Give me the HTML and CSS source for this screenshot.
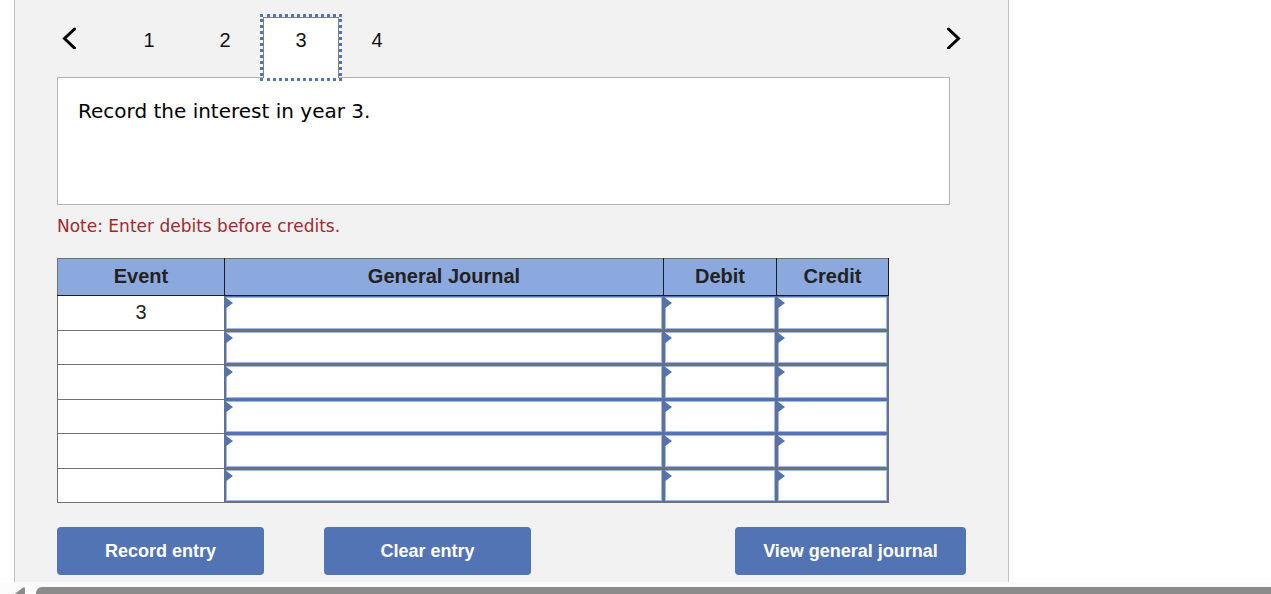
FILE: index.html
```html
<!DOCTYPE html>
<html lang="en">
<head>
<meta charset="utf-8">
<title>Journal entry worksheet</title>
<link rel="stylesheet" href="styles.css">
</head>
<body>
<main class="panel">
  <nav class="steps" aria-label="Entries">
    <button class="arrow" type="button" aria-label="Previous"><svg width="16" height="22" viewBox="0 0 16 22"><path d="M12.500 2L2.500 11.500L12.500 21"/></svg></button>
    <div class="tabs">
      <button class="tab" type="button">1</button>
      <button class="tab" type="button">2</button>
      <button class="tab tab-active" type="button" aria-current="step">3</button>
      <button class="tab" type="button">4</button>
    </div>
    <button class="arrow" type="button" aria-label="Next"><svg width="16" height="22" viewBox="0 0 16 22"><path d="M3.500 2L13.500 11.500L3.500 21"/></svg></button>
  </nav>
  <section class="prompt">Record the interest in year 3.</section>
  <p class="note">Note: Enter debits before credits.</p>
  <table class="journal">
    <colgroup><col class="col-event"><col class="col-journal"><col class="col-debit"><col class="col-credit"></colgroup>
    <thead><tr><th scope="col">Event</th><th scope="col">General Journal</th><th scope="col">Debit</th><th scope="col">Credit</th></tr></thead>
    <tbody>
      <tr><td>3</td><td class="entry"><input type="text" aria-label="Account 1"></td><td class="entry"><input type="text" aria-label="Debit 1"></td><td class="entry"><input type="text" aria-label="Credit 1"></td></tr>
      <tr><td></td><td class="entry"><input type="text" aria-label="Account 2"></td><td class="entry"><input type="text" aria-label="Debit 2"></td><td class="entry"><input type="text" aria-label="Credit 2"></td></tr>
      <tr><td></td><td class="entry"><input type="text" aria-label="Account 3"></td><td class="entry"><input type="text" aria-label="Debit 3"></td><td class="entry"><input type="text" aria-label="Credit 3"></td></tr>
      <tr><td></td><td class="entry"><input type="text" aria-label="Account 4"></td><td class="entry"><input type="text" aria-label="Debit 4"></td><td class="entry"><input type="text" aria-label="Credit 4"></td></tr>
      <tr><td></td><td class="entry"><input type="text" aria-label="Account 5"></td><td class="entry"><input type="text" aria-label="Debit 5"></td><td class="entry"><input type="text" aria-label="Credit 5"></td></tr>
      <tr><td></td><td class="entry"><input type="text" aria-label="Account 6"></td><td class="entry"><input type="text" aria-label="Debit 6"></td><td class="entry"><input type="text" aria-label="Credit 6"></td></tr>
    </tbody>
  </table>
  <div class="actions">
    <div class="actions-left">
      <button class="action" type="button">Record entry</button>
      <button class="action" type="button">Clear entry</button>
    </div>
    <button class="action action-wide" type="button">View general journal</button>
  </div>
</main>
<div class="scrollbar" aria-hidden="true">
  <svg class="scroll-arrow" width="12" height="12" viewBox="0 0 12 12"><path d="M0 7.500L9 0.500Q11 -0.500 11 2V12H0Z"/></svg>
  <div class="scroll-thumb"></div>
</div>
</body>
</html>
```
FILE: styles.css
```css
* { box-sizing: border-box; }
body {
  margin: 0;
  background: #fff;
  color: #000;
  font-family: "Liberation Sans", Arial, sans-serif;
  font-size: 20px;
}
button { border: 0; padding: 0; background: none; color: inherit; font: inherit; }
.panel {
  max-width: 995px;
  margin: 0 14px;
  padding: 17px 42px 7px;
  border: solid #c0c0c0;
  border-width: 0 1px;
  background: #f2f2f2;
}
.steps { display: flex; align-items: flex-start; }
.arrow { display: flex; padding: 10px 5px 0; }
.arrow svg { fill: none; stroke: #000; stroke-width: 3; stroke-linecap: round; }
.tabs { display: flex; flex: 1; margin-left: 28px; }
.tab {
  width: 76px;
  height: 61px;
  padding-bottom: 16px;
  border: solid transparent;
  border-width: 1px 1px 0;
  color: #111;
}
.tab-active {
  position: relative;
  background: #fff;
  border-color: #808080;
  outline: 3px dotted #5274b4;
}
.prompt {
  min-height: 128px;
  margin: -1px 16px 0 0;
  padding: 20px;
  border: 1px solid #b3b3b3;
  background: #fff;
  font-family: "DejaVu Sans", Verdana, sans-serif;
  font-size: 20px;
  line-height: 26px;
}
.note {
  margin: 9px 0 20px;
  color: #9e2a2b;
  font-family: "DejaVu Sans", Verdana, sans-serif;
  font-size: 17px;
  line-height: 24px;
}
.journal {
  width: 100%;
  max-width: 832px;
  table-layout: fixed;
  border-collapse: collapse;
  background: #fff;
  color: #222;
}
.col-event { width: 167px; }
.col-debit { width: 113px; }
.col-credit { width: 112px; }
.journal th {
  height: 37px;
  padding: 0 0 2px;
  border: 1px solid #1c1c1c;
  background: #8ca9df;
}
.journal thead th { border-top-color: #707070; }
.journal th:first-child { border-left-color: #707070; }
.journal td {
  position: relative;
  height: 35px;
  padding: 0;
  border: 1px solid #707070;
  text-align: center;
}
.journal td:first-child { padding-bottom: 2px; }
.journal tr:nth-child(even) td { height: 34px; }
.entry input {
  display: block;
  width: 100%;
  height: 34px;
  padding: 0 8px;
  border: 1px solid #5274b4;
  box-shadow: inset 0 0 0 1px #a4b7dc;
  background: #fff;
  font: inherit;
}
.journal tr:nth-child(even) input { height: 33px; }
.entry::before {
  content: "";
  position: absolute;
  top: 1px;
  left: 0;
  width: 8px;
  height: 12px;
  background: #5274b4;
  clip-path: polygon(0 0, 100% 50%, 0 100%);
}
.actions { display: flex; justify-content: space-between; margin-top: 24px; }
.actions-left { display: flex; gap: 60px; }
.action {
  width: 207px;
  height: 48px;
  border-radius: 4px;
  background: #5274b4;
  color: #fff;
  font-size: 18px;
  font-weight: bold;
}
.action-wide { width: 231px; }
.scrollbar {
  display: flex;
  height: 12px;
  padding: 5px 0 0 14px;
  overflow: hidden;
  background: #fcfcfc;
}
.scroll-arrow { flex: none; fill: #8b8b8b; }
.scroll-thumb {
  flex: 1;
  height: 14px;
  margin-left: 10px;
  border-radius: 6px 0 0 6px;
  background: #8b8b8b;
}
```
